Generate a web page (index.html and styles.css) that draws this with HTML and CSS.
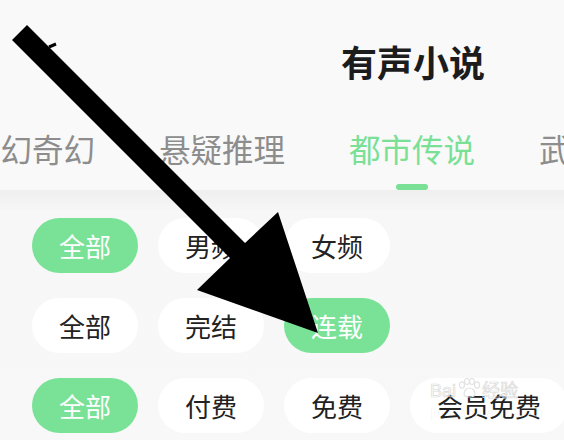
FILE: index.html
```html
<!DOCTYPE html>
<html lang="zh-CN">
<head>
<meta charset="utf-8">
<title>有声小说</title>
<link rel="stylesheet" href="styles.css">
</head>
<body>
<div class="page">
  <header class="header">
    <div class="title-row"><h1 class="title">有声小说</h1></div>
    <nav class="tabs">
      <div class="tab">玄幻奇幻</div>
      <div class="tab">悬疑推理</div>
      <div class="tab active">都市传说<span class="indicator"></span></div>
      <div class="tab">武侠仙侠</div>
    </nav>
  </header>
  <main class="filters">
    <div class="row">
      <span class="chip on">全部</span>
      <span class="chip">男频</span>
      <span class="chip">女频</span>
    </div>
    <div class="row">
      <span class="chip">全部</span>
      <span class="chip">完结</span>
      <span class="chip on">连载</span>
    </div>
    <div class="row">
      <span class="chip on">全部</span>
      <span class="chip">付费</span>
      <span class="chip">免费</span>
      <span class="chip">会员免费</span>
    </div>
  </main>
  <div class="watermark">
    <span class="wm-main">Bai<svg class="paw" viewBox="0 0 24 20" width="24" height="20"><g fill="none" stroke="#e2e2e2" stroke-width="1.2"><ellipse cx="5" cy="7" rx="2.5" ry="3.2"/><ellipse cx="10" cy="3.5" rx="2.5" ry="3"/><ellipse cx="15" cy="3.5" rx="2.5" ry="3"/><ellipse cx="20" cy="7" rx="2.5" ry="3.2"/><path d="M7 16c0-4 3-6 5.5-6s5.5 2 5.5 6c0 2-2 3-5.5 3S7 18 7 16z"/></g></svg>经验</span>
    <span class="wm-url">jingyan.baidu.com</span>
  </div>
  <svg class="arrow" width="564" height="440" viewBox="0 0 564 440">
    <polygon points="12,40 27,25 245,243 278,212 318,333 197,290 230,258" fill="#000"/>
    <path d="M49 47 L56 44" stroke="#000" stroke-width="3"/>
  </svg>
</div>
</body>
</html>
```
FILE: styles.css
```css
* { box-sizing: border-box; margin: 0; padding: 0; }
html, body {
  width: 564px;
  height: 440px;
  overflow: hidden;
  background: #f7f7f7;
  font-family: "Noto Sans CJK SC", "Noto Sans", sans-serif;
}
.page {
  position: relative;
  width: 564px;
  height: 440px;
  overflow: hidden;
}
.header {
  background: #f9f9f9;
  height: 190px;
  overflow: hidden;
}
.title-row {
  height: 122px;
  padding-left: 341px;
  padding-top: 36px;
}
.title {
  font-size: 36px;
  line-height: 50px;
  font-weight: 700;
  color: #1c1c1c;
  white-space: nowrap;
}
.tabs {
  display: flex;
  gap: 64px;
  margin-left: -31px;
  white-space: nowrap;
}
.tab {
  position: relative;
  flex: none;
  font-size: 31.5px;
  line-height: 52px;
  height: 68px;
  color: #8d8d8d;
}
.tab.active { color: #79e096; }
.indicator {
  position: absolute;
  left: 50%;
  top: 62px;
  width: 32px;
  height: 6px;
  margin-left: -16px;
  border-radius: 3px;
  background: #79e096;
}
.filters {
  background: linear-gradient(#efefef, #f7f7f7 22px, #f8f8f8);
  height: 250px;
  padding: 28px 0 0 32px;
  display: flex;
  flex-direction: column;
  gap: 25px;
}
.row {
  display: flex;
  gap: 20px;
  white-space: nowrap;
}
.chip {
  flex: none;
  height: 55px;
  min-width: 106px;
  padding: 0 27px;
  border-radius: 28px;
  background: #fff;
  color: #222;
  font-size: 26px;
  line-height: 55px;
  text-align: center;
}
.chip.on {
  background: #79e296;
  color: #fff;
}
.watermark {
  position: absolute;
  left: 430px;
  top: 376px;
  display: flex;
  flex-direction: column;
  pointer-events: none;
}
.wm-main {
  display: flex;
  align-items: flex-end;
  font-family: "Liberation Sans", sans-serif;
  font-size: 18px;
  line-height: 30px;
  color: transparent;
  -webkit-text-stroke: 0.7px #dadada;
}
.paw { margin: 0 1px 8px 1px; }
.wm-url {
  font-family: "Liberation Sans", sans-serif;
  font-size: 13px;
  line-height: 14px;
  color: rgba(0,0,0,0.05);
  letter-spacing: 0.5px;
}
.arrow {
  position: absolute;
  left: 0;
  top: 0;
}
```
